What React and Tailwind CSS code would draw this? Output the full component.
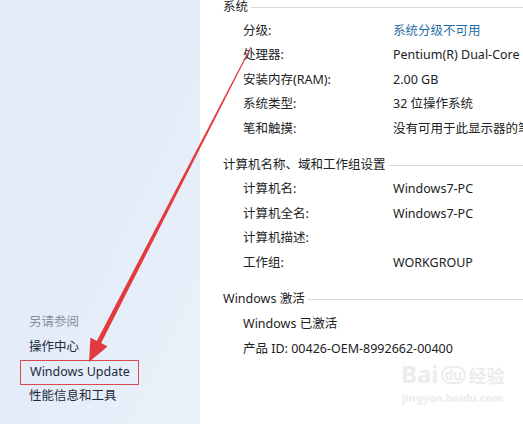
const SYSTEM_ROWS = [
  { label: '分级:', value: '系统分级不可用', link: true },
  { label: '处理器:', value: 'Pentium(R) Dual-Core CPU' },
  { label: '安装内存(RAM):', value: '2.00 GB' },
  { label: '系统类型:', value: '32 位操作系统' },
  { label: '笔和触摸:', value: '没有可用于此显示器的笔或触控输入' },
]

const NAME_ROWS = [
  { label: '计算机名:', value: 'Windows7-PC' },
  { label: '计算机全名:', value: 'Windows7-PC' },
  { label: '计算机描述:', value: '' },
  { label: '工作组:', value: 'WORKGROUP' },
]

const FONT = "font-['Segoe_UI','Noto_Sans','Noto_Sans_CJK_SC',sans-serif]"

function Section({ title, children }) {
  return (
    <div>
      <div className="flex items-center h-[24px]">
        <span className="pl-[23px] pr-[3px] whitespace-nowrap text-[#222]">{title}</span>
        <div className="flex-1 h-px bg-[#d5d9de]" />
      </div>
      <div className="flex flex-col">{children}</div>
    </div>
  )
}

function Row({ label, value, link }) {
  return (
    <div className="flex items-center h-[24.5px] whitespace-nowrap">
      <span className="pl-[43px] w-[193px] shrink-0 text-[#222]">{label}</span>
      <span className={link ? 'text-[#1f6ea6]' : 'text-[#222]'}>{value}</span>
    </div>
  )
}

export default function App() {
  return (
    <div className={`relative flex w-[523px] h-[424px] overflow-hidden bg-white text-[12.5px] ${FONT}`}>
      {/* Left task pane */}
      <div className="w-[200px] shrink-0 h-full bg-gradient-to-br from-[#e4ecf7] via-[#e3ecf8] to-[#eaf1fa] flex flex-col justify-end pb-[15px]">
        <div className="pl-[29px] flex flex-col">
          <div className="h-[24.5px] flex items-center text-[#8a8f96]">另请参阅</div>
          <div className="h-[24.5px] flex items-center text-[#1e2a3a]">操作中心</div>
          <div className="h-[25px] -ml-[9px] w-[119px] flex items-center pl-[9px] border border-[#d9484c] text-[#1e2a3a]">Windows Update</div>
          <div className="h-[24.5px] flex items-center text-[#1e2a3a]">性能信息和工具</div>
        </div>
      </div>

      {/* Main content */}
      <div className="flex-1 overflow-hidden -mt-[5px] flex flex-col gap-[12px]">
        <Section title="系统">
          {SYSTEM_ROWS.map((r) => <Row key={r.label} {...r} />)}
        </Section>
        <Section title="计算机名称、域和工作组设置">
          {NAME_ROWS.map((r) => <Row key={r.label} {...r} />)}
        </Section>
        <Section title="Windows 激活">
          <div className="flex flex-col pl-[43px] text-[#222]">
            <div className="h-[26px] flex items-center">Windows 已激活</div>
            <div className="h-[24px] flex items-center">产品 ID: 00426-OEM-8992662-00400</div>
          </div>
        </Section>
      </div>

      {/* Baidu watermark */}
      <div className="absolute left-[401px] top-[362px] flex flex-col items-start text-[#ececef] select-none pointer-events-none">
        <div className="flex items-end gap-[2px] leading-none font-bold">
          <span className="text-[24px]">Bai</span>
          <span className="text-[14px] border-2 border-[#ececef] rounded-full px-[2px] mb-[2px]">du</span>
          <span className="text-[18px] mb-[1px]">经验</span>
        </div>
        <div className="text-[11px] font-bold mt-[4px] ml-[1px]">jingyan.baidu.com</div>
      </div>

      {/* Red annotation arrow */}
      <svg className="absolute inset-0 pointer-events-none" width="523" height="424" viewBox="0 0 523 424">
        <polygon points="251.4,47.2 101.2,343.1 107.5,346.5 89,362 90.5,337.5 96.8,340.9 250.6,46.8" fill="#e23a3d" />
      </svg>
    </div>
  )
}
